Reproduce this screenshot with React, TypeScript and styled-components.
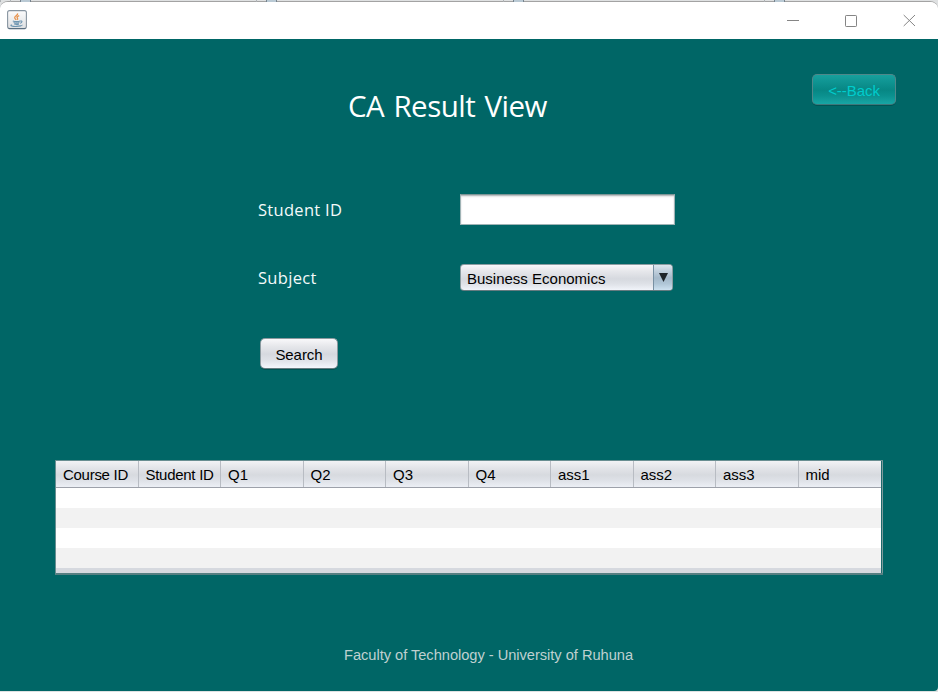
import React from "react";
import styled, { createGlobalStyle } from "styled-components";

const GlobalStyle = createGlobalStyle`
  * { box-sizing: border-box; }
  html, body { margin: 0; padding: 0; background: #dfe1e2; overflow: hidden; }
`;

const Desktop = styled.div`
  width: 938px;
  height: 692px;
  overflow: hidden;
  background: #dfe1e2;
  font-family: "Liberation Sans", Arial, sans-serif;
  font-size: 15px;
`;

const BackgroundStrip = styled.div`
  height: 2px;
  display: flex;
`;

const StripCell = styled.div<{ $width: number }>`
  width: ${(p) => p.$width}px;
  flex: none;
  height: 2px;
  border-left: 1px solid #aeb2b5;
  padding-left: 9px;
`;

const StripIcon = styled.div`
  width: 11px;
  height: 2px;
  background: #b9c9d4;
  border: solid #76838e;
  border-width: 0 1px;
`;

const Window = styled.div`
  height: 690px;
  margin-top: -1px;
  border-top: 1px solid #a3a3a3;
  border-radius: 8px 8px 4px 0;
  overflow: hidden;
  background: #fff;
  display: flex;
  flex-direction: column;
`;

const TitleBar = styled.header`
  height: 37px;
  flex: none;
  display: flex;
  align-items: flex-start;
  justify-content: space-between;
  padding: 8px 22px 0 7px;
  background: #fff;
`;

const WindowControls = styled.div`
  display: flex;
  gap: 45px;
  padding-top: 4px;
`;

const ControlIcon = styled.svg`
  width: 13px;
  height: 13px;
  fill: none;
  stroke: #858585;
  stroke-width: 1;
`;

const Content = styled.main`
  flex: 1;
  background: #006666;
  display: flex;
  flex-direction: column;
`;

const Heading = styled.div`
  height: 155px;
  flex: none;
  display: flex;
  justify-content: space-between;
  align-items: flex-start;
  padding: 35px 42px 0 348px;
`;

const Title = styled.h1`
  margin: 12px 0 0;
  font-family: "Open Sans", "Noto Sans", sans-serif;
  font-size: 29.5px;
  line-height: 40px;
  font-weight: 400;
  letter-spacing: -0.5px;
  word-spacing: 2px;
  white-space: nowrap;
  color: #fff;
`;

const Button = styled.button<{ $teal?: boolean }>`
  width: ${(p) => (p.$teal ? 84 : 78)}px;
  height: 31px;
  padding: 2px 0 0;
  border: 1px solid ${(p) => (p.$teal ? "#50888a" : "#8c9aa0")};
  border-bottom-color: ${(p) => (p.$teal ? "#3f7679" : "#657b80")};
  border-radius: 5px;
  font: 15px "Liberation Sans", Arial, sans-serif;
  letter-spacing: -0.05px;
  white-space: nowrap;
  color: ${(p) => (p.$teal ? "#00cccc" : "#000")};
  background: ${(p) =>
    p.$teal
      ? "linear-gradient(#18a09d 0%, #109694 20%, #078784 52%, #0b918f 72%, #18a5a4 100%)"
      : "linear-gradient(#f8f8fa 0%, #e6e7eb 25%, #d6d9df 52%, #dee1e7 72%, #f3f6fc 100%)"};
  box-shadow: 0 1px 0 rgba(0, 50, 50, 0.35);
`;

const Form = styled.form`
  height: 266px;
  flex: none;
  display: grid;
  grid-template-columns: 202px 215px;
  grid-template-rows: 31px 27px 31px;
  row-gap: 39px;
  padding-left: 258px;
  align-content: start;
`;

const Label = styled.label<{ $line?: number }>`
  font-family: "Open Sans", "Noto Sans", sans-serif;
  font-size: 16.5px;
  line-height: ${(p) => p.$line ?? 31}px;
  letter-spacing: 0.3px;
  height: 27px;
  color: #f4fafa;
`;

const Input = styled.input`
  width: 215px;
  height: 31px;
  padding: 0 6px;
  outline: 0;
  border: 1px solid #9fb3b5;
  border-top-color: #7e9697;
  background: #fff;
  box-shadow: inset 0 1px 1px #b7bbbd, inset 0 2px 2px #e8e8e8;
`;

const Combo = styled.div`
  width: 213px;
  height: 27px;
  display: flex;
  border: 1px solid #8c9da2;
  border-bottom-color: #657b80;
  border-radius: 4px;
  overflow: hidden;
  background: linear-gradient(#f8f8fa 0%, #e6e7eb 25%, #d6d9df 55%, #dee1e7 75%, #f1f4fa 100%);
`;

const ComboValue = styled.span`
  flex: 1;
  padding-left: 6px;
  line-height: 28px;
`;

const ComboArrow = styled.span`
  width: 19px;
  display: flex;
  align-items: flex-start;
  justify-content: center;
  padding-top: 8px;
  border-left: 1px solid #7890a3;
  background: linear-gradient(#dce6ee 0%, #bdccda 28%, #a5b9ca 52%, #b0c6d7 75%, #cde1f0 100%);
`;

const SearchSlot = styled.div`
  grid-column: 1;
  padding: 8px 0 0 2px;
`;

const Table = styled.section`
  width: 828px;
  height: 115px;
  flex: none;
  margin-left: 55px;
  display: flex;
  flex-direction: column;
  border: 1px solid #688e91;
  border-right: 0;
  border-bottom: 2px solid #567f82;
  background: linear-gradient(to right, transparent 825px, #1f6a6d 825px, #1f6a6d 826px, #7d999b 826px);
`;

const HeaderRow = styled.div`
  width: 825px;
  height: 27px;
  flex: none;
  display: grid;
  grid-template-columns: repeat(10, 82.5px);
  border-bottom: 1px solid #9da1aa;
  background: linear-gradient(#f2f3f5 0%, #e2e4e8 28%, #d7dadf 54%, #dfe2e8 76%, #eceff5 100%);
`;

const HeaderCell = styled.span<{ $tight?: boolean }>`
  padding-left: 7px;
  line-height: 28px;
  height: 26px;
  border-right: 1px solid #b8bcc3;
  letter-spacing: ${(p) => (p.$tight ? "-0.28px" : "0")};
  white-space: nowrap;
  &:last-child { border-right: 0; }
`;

const Row = styled.div<{ $shade?: boolean }>`
  width: 825px;
  height: 20px;
  flex: none;
  background: ${(p) => (p.$shade ? "#f2f2f2" : "#fff")};
`;

const TableFill = styled.div`
  width: 825px;
  flex: 1;
  background: #d6d9df;
`;

const Footer = styled.footer`
  padding: 72px 0 0 344px;
  line-height: 17px;
  color: #bfd0d0;
  font-size: 14.67px;
  letter-spacing: -0.035px;
  white-space: nowrap;
`;

const columns = ["Course ID", "Student ID", "Q1", "Q2", "Q3", "Q4", "ass1", "ass2", "ass3", "mid"];
const stripWidths = [246, 247, 261, 177];

function JavaIcon() {
  return (
    <svg width="20" height="20" viewBox="0 0 20 20" fill="none">
      <defs>
        <linearGradient id="tile" x1="0" y1="0" x2="0" y2="1">
          <stop stopColor="#fcfcfc" />
          <stop offset="1" stopColor="#dddfe1" />
        </linearGradient>
      </defs>
      <rect x=".6" y=".6" width="18.8" height="18" rx="2" fill="url(#tile)" stroke="#8794a0" strokeWidth="1.1" />
      <path d="M1.5 18.6h17" stroke="#566b7d" />
      <path d="M10.6 3.4c.7 2-3.5 2.7-2.9 4.5.2.8 1.1 1.3 1.6 2M12.2 5.6c-2 .7-2.7 1.5-1.8 2.6.5.6.4 1.1-.1 1.6" stroke="#e8934e" strokeWidth="1.3" />
      <path d="M5.8 11c2.2.7 5.6.7 7.4 0M6.6 12.6c1.7.6 4.3.6 5.8 0M7.2 14c1.4.5 3.6.5 4.8 0M13.2 11c2.5-.5 2.2 1.8-.2 2.3M4.8 14.8c-2.6.7.7 1.8 4.7 1.6 3.3-.1 6.1-.8 5.4-1.5" stroke="#6c94b0" strokeWidth="1.1" />
    </svg>
  );
}

export default function App() {
  return (
    <>
      <GlobalStyle />
      <Desktop>
        <BackgroundStrip>
          <StripCell $width={10} />
          {stripWidths.map((w, i) => (
            <StripCell key={i} $width={w}>
              <StripIcon />
            </StripCell>
          ))}
        </BackgroundStrip>
        <Window>
          <TitleBar>
            <JavaIcon />
            <WindowControls>
              <ControlIcon viewBox="0 0 13 13"><path d="M0 6.5h12" /></ControlIcon>
              <ControlIcon viewBox="0 0 13 13"><rect x=".5" y="1.5" width="11" height="11" rx=".7" /></ControlIcon>
              <ControlIcon viewBox="0 0 13 13"><path d="M.7 1l11.3 11M12 1L.7 12" /></ControlIcon>
            </WindowControls>
          </TitleBar>
          <Content>
            <Heading>
              <Title>CA Result View</Title>
              <Button $teal type="button">&lt;--Back</Button>
            </Heading>
            <Form>
              <Label htmlFor="student">Student ID</Label>
              <Input id="student" />
              <Label $line={27}>Subject</Label>
              <Combo>
                <ComboValue>Business Economics</ComboValue>
                <ComboArrow>
                  <svg width="9" height="9" viewBox="0 0 9 9"><path d="M0 0h9L4.5 9z" fill="#1d2328" /></svg>
                </ComboArrow>
              </Combo>
              <SearchSlot>
                <Button type="button">Search</Button>
              </SearchSlot>
            </Form>
            <Table>
              <HeaderRow>
                {columns.map((c) => <HeaderCell key={c} $tight={c.endsWith("ID")}>{c}</HeaderCell>)}
              </HeaderRow>
              <Row />
              <Row $shade />
              <Row />
              <Row $shade />
              <TableFill />
            </Table>
            <Footer>Faculty of Technology - University of Ruhuna</Footer>
          </Content>
        </Window>
      </Desktop>
    </>
  );
}
